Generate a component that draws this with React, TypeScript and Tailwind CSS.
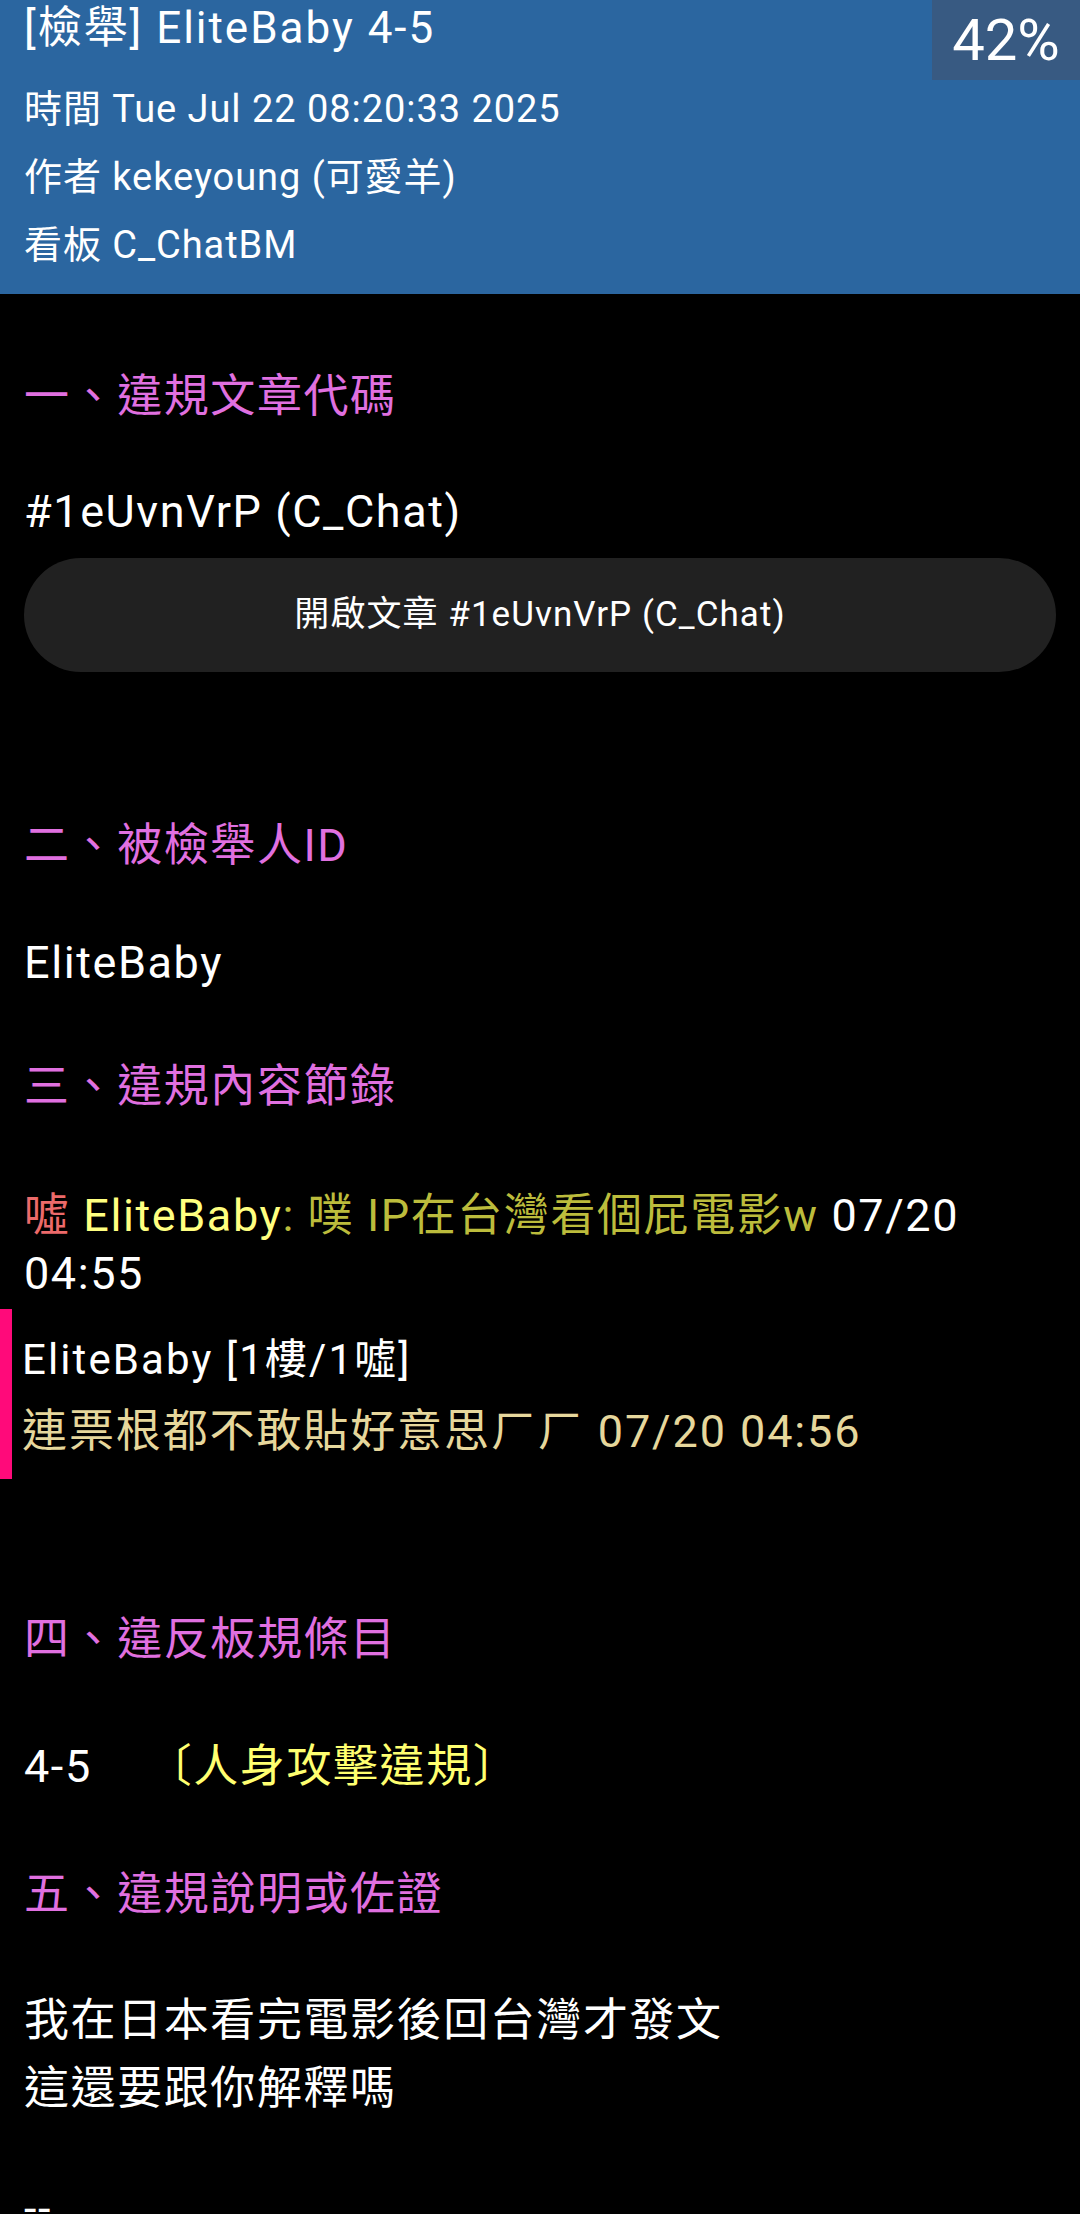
const FONT = "font-['Roboto','Noto_Sans_CJK_TC',sans-serif]";

function Heading({ children }: { children: React.ReactNode }) {
  return <p className="h-[68px] leading-[68px] text-[#e070e0]">{children}</p>;
}

function Line({ children }: { children: React.ReactNode }) {
  return <p className="h-[68px] leading-[68px] text-white">{children}</p>;
}

export default function App() {
  return (
    <div className={`min-h-screen bg-black ${FONT}`}>
      {/* Header */}
      <header className="flex bg-[#2b66a0] pb-[15px] text-white">
        <div className="flex-1 pl-6">
          <p className="h-[56px] text-[44px] leading-[56px] tracking-[0.045em]">[檢舉] EliteBaby 4-5</p>
          <div className="mt-[19px] text-[38px] tracking-[0.025em]">
            <p className="h-[68px] leading-[68px]">時間 Tue Jul 22 08:20:33 2025</p>
            <p className="h-[68px] leading-[68px]">作者 kekeyoung (可愛羊)</p>
            <p className="h-[68px] leading-[68px]">看板 C_ChatBM</p>
          </div>
        </div>
        <div className="flex h-[80px] w-[148px] items-center justify-center bg-[#385a82] text-[58px] leading-none">
          42%
        </div>
      </header>

      {/* Body */}
      <main className="px-6 pt-[69px] text-[45px] tracking-[0.035em]">
        <Heading>一、違規文章代碼</Heading>
        <div className="mt-[47px]">
          <Line>#1eUvnVrP (C_Chat)</Line>
        </div>
        <button className="mt-3 flex h-[114px] w-full items-center justify-center rounded-full bg-[#212121] text-[35px] tracking-[0.03em] text-white">
          開啟文章 #1eUvnVrP (C_Chat)
        </button>

        <div className="mt-[140px]">
          <Heading>二、被檢舉人ID</Heading>
        </div>
        <div className="mt-[49px]">
          <Line>EliteBaby</Line>
        </div>

        <div className="mt-[56px]">
          <Heading>三、違規內容節錄</Heading>
        </div>
        <p className="mt-[66px] leading-[58px]">
          <span className="text-[#ec6a6a]">噓 </span>
          <span className="text-[#ffff80]">EliteBaby</span>
          <span className="text-[#bcbc3c]">: 噗 IP在台灣看個屁電影w</span>
          <span className="text-white"> 07/20</span>
          <br />
          <span className="text-white">04:55</span>
        </p>
      </main>

      {/* Reply */}
      <div className="mt-[6px] flex">
        <div className="w-3 bg-[#ff0a7a]" />
        <div className="pl-[10px] pt-[15px] pb-[11px] leading-[72px]">
          <p className="text-[42px] tracking-[0.05em] text-white">EliteBaby [1樓/1噓]</p>
          <p className="text-[45px] tracking-[0.042em] text-[#e6d79c]">連票根都不敢貼好意思ㄏㄏ 07/20 04:56</p>
        </div>
      </div>

      <section className="px-6 pt-[127px] text-[45px] tracking-[0.035em]">
        <Heading>四、違反板規條目</Heading>
        <p className="mt-[59px] h-[68px] whitespace-pre leading-[68px] text-white">
          4-5{"    "}
          <span className="pl-1 text-[#ffff70]">〔人身攻擊違規〕</span>
        </p>
        <div className="mt-[60px]">
          <Heading>五、違規說明或佐證</Heading>
        </div>
        <div className="mt-[58px]">
          <Line>我在日本看完電影後回台灣才發文</Line>
          <Line>這還要跟你解釋嗎</Line>
        </div>
        <div className="mt-[52px]">
          <Line>--</Line>
        </div>
      </section>
    </div>
  );
}
